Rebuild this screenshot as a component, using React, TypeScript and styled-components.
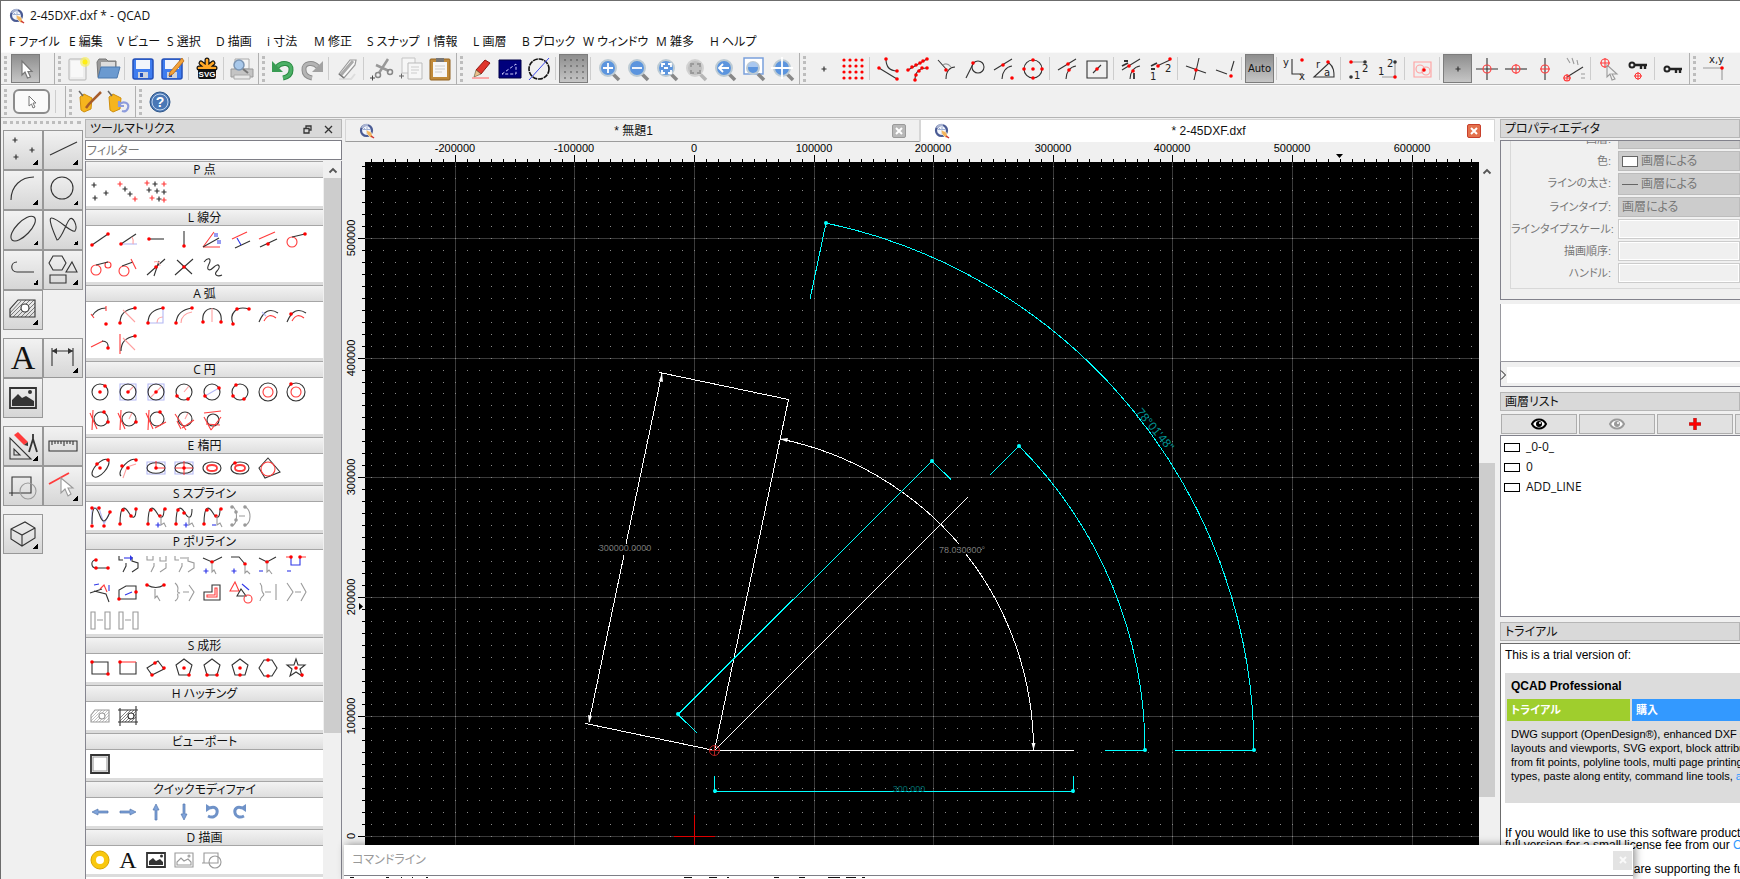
import React from "react";
import styled, { createGlobalStyle, css } from "styled-components";

const ui = `"Open Sans", "Noto Sans CJK JP", sans-serif`;
const plain = `"Liberation Sans", "Noto Sans CJK JP", sans-serif`;

const GlobalStyle = createGlobalStyle`
  * { box-sizing: border-box; font-feature-settings: "palt" !important; }
  body { margin: 0; background: #f0f0f0; font: 12px/16px ${ui}; color: #111; }
  button, input, select { font: inherit; color: inherit; margin: 0; padding: 0; }
`;

/* ---------- glyph drawing ---------- */

const inks: Record<string, string> = {
  k: "#333333", r: "#ff3b3b", l: "#ffa0a0", b: "#3038e8", v: "#b4b8f4", g: "#9a9a9a", w: "#ffffff",
};

/* Each layer is "<kind><ink>:<data>": p path, t thick path, h hairline, f filled path, o circle (x,y,r), + crosses, . dots */
function Layer({ spec }: { spec: string }) {
  const [head, data] = spec.split(":");
  const ink = inks[head[1]];
  const pts = () => data.split(" ").map((p) => p.split(",").map(Number));
  switch (head[0]) {
    case "p": return <path d={data} fill="none" stroke={ink} strokeWidth={1.1} />;
    case "t": return <path d={data} fill="none" stroke={ink} strokeWidth={1.8} />;
    case "h": return <path d={data} fill="none" stroke={ink} strokeWidth={0.6} />;
    case "f": return <path d={data} fill={ink} />;
    case "o": return <>{pts().map(([x, y, r], i) => <circle key={i} cx={x} cy={y} r={r} fill="none" stroke={ink} strokeWidth={1.1} />)}</>;
    case "+": return <path d={pts().map(([x, y]) => `M${x - 2.5} ${y}h5M${x} ${y - 2.5}v5`).join("")} stroke={ink} strokeWidth={1.2} />;
    default: return <>{pts().map(([x, y], i) => <circle key={i} cx={x} cy={y} r={1.8} fill={head[1] === "r" ? "#ff0000" : ink} />)}</>;
  }
}

const Svg = styled.svg<{ $dim?: boolean }>`
  display: block;
  flex: none;
  overflow: visible;
  opacity: ${(p) => (p.$dim ? 0.55 : 1)};
`;

function Glyph({ s, box = 20, size = box }: { s: string; box?: number; size?: number }) {
  return (
    <Svg width={size} height={size} viewBox={`0 0 ${box} ${box}`} aria-hidden="true">
      {s.split(";").map((l, i) => <Layer key={i} spec={l} />)}
    </Svg>
  );
}

function Logo() {
  return (
    <Svg width="16" height="16" viewBox="0 0 16 16" aria-hidden="true">
      <circle cx="7.500" cy="7.500" r="5.500" fill="#f3f6fc" stroke="#4a5b94" strokeWidth="2.200" />
      <path d="M3 5A5.500 5.500 0 0 1 9 2" fill="none" stroke="#a9b4d2" strokeWidth="2.200" />
      <path d="M4 6.500h8M8 3.500v8M5 5l6 6" stroke="#9fb0d4" strokeWidth="1" />
      <path d="M7 7l5 2 2 5-2 1-4-4z" fill="#f2b45c" stroke="#fff" strokeWidth=".5" />
      <path d="M12 13l3 2" stroke="#c33" strokeWidth="1.500" />
    </Svg>
  );
}

/* ---------- toolbar pictures ---------- */

const T = ({ children, dim }: { children: React.ReactNode; dim?: boolean }) => (
  <Svg width="24" height="24" viewBox="0 0 24 24" $dim={dim} aria-hidden="true">{children}</Svg>
);

const Cursor = () => <T><path d="M8 4v14l3-3 2.500 6 3-1-2.500-5.500h4z" fill="#fff" stroke="#777" strokeWidth="1.200" /></T>;
const NewFile = () => (
  <T>
    <rect x="2" y="2" width="17" height="21" rx="1" fill="#eee" stroke="#b5b5b5" />
    <path d="M4 4h12v16H4z" fill="#f8f8f8" />
    <circle cx="18" cy="5" r="5" fill="#f6ee60" opacity=".7" /><circle cx="18" cy="5" r="2.500" fill="#ffee11" />
  </T>
);
const OpenFile = () => (
  <T>
    <path d="M1 5l2-3h7l2 2h8v16H2z" fill="#999" stroke="#777" />
    <path d="M5 5h14v6H5z" fill="#ddd" />
    <path d="M5 10h19l-3 11H2z" fill="#6b9ad0" stroke="#4a78ae" />
  </T>
);
const Disk = ({ pen }: { pen?: boolean }) => (
  <T>
    <rect x="2" y="2" width="20" height="20" rx="2" fill="#3f7df0" stroke="#2450b8" strokeWidth="1.500" />
    <path d="M5 3h14v9H5z" fill="#f2f5fb" />
    <path d="M7 15h10v6H7z" fill="#cdd3de" /><path d="M9 16h3v4H9z" fill="#2450b8" />
    {pen && <path d="M22 1l2 3-11 13-4 2 1-4z" fill="#f2a23a" stroke="#b86a14" strokeWidth=".8" />}
  </T>
);
const SvgMark = () => (
  <T>
    <path d="M12 11V3M12 11L6 6M12 11L18 6M12 11H4M12 11H20" stroke="#111" strokeWidth="5" strokeLinecap="round" />
    <rect x="3" y="10" width="18" height="12" rx="2" fill="#111" />
    <path d="M12 11V3M12 11L6 6M12 11L18 6M12 11H4M12 11H20" stroke="#ffa726" strokeWidth="2.600" strokeLinecap="round" />
    <path d="M3 12H21V20H3Z" fill="#111" />
    <text x="12" y="20" textAnchor="middle" fontFamily="Liberation Sans" fontWeight="bold" fontSize="8" fill="#fff">SVG</text>
  </T>
);
const Printer = () => (
  <T>
    <path d="M5 2h14v10H5z" fill="#f4f4f4" stroke="#aaa" />
    <path d="M1 12h22v8H1z" fill="#c4c4c4" stroke="#999" /><path d="M4 18h16v4H4z" fill="#e8e8e8" stroke="#aaa" />
    <circle cx="9" cy="8" r="5" fill="#a8c8ea" stroke="#7b95b3" strokeWidth="1.500" /><path d="M13 12l5 4" stroke="#777" strokeWidth="2" />
  </T>
);
const Undo = ({ redo }: { redo?: boolean }) => (
  <T>
    <g transform={redo ? "matrix(-1 0 0 1 24 0)" : undefined}>
      <path d="M6 10C11 4 21 6 20 13c0 4-3 7-8 8" fill="none" stroke={redo ? "#8c8c8c" : "#2a8a42"} strokeWidth="5" />
      <path d="M6 10C11 4 21 6 20 13c0 4-3 7-8 8" fill="none" stroke={redo ? "#b4b4b4" : "#4cb066"} strokeWidth="3" />
      <path d="M1 4v11h11z" fill={redo ? "#a2a2a2" : "#3a9c54"} />
    </g>
  </T>
);
const Eraser = () => <T><path d="M4 22h12l4-5" fill="none" stroke="#ddd" strokeWidth="2" /><path d="M4 17L15 3h6l-1 5L9 21z" fill="#fafafa" stroke="#999" strokeWidth="1.200" /><path d="M6 18L18 4" stroke="#aaa" strokeWidth="3" /><path d="M4 17l5 4" stroke="#777" strokeWidth="1.500" /></T>;
const Cut = () => (
  <T><path d="M18 2L9 16M6 8l13 6" stroke="#999" strokeWidth="2.500" /><circle cx="8" cy="18" r="2.500" fill="none" stroke="#888" strokeWidth="1.500" /><circle cx="20" cy="15" r="2.500" fill="none" stroke="#888" strokeWidth="1.500" /><path d="M0 21h5M2.500 18.500v5" stroke="#444" /></T>
);
const Copy = () => (
  <T><path d="M3 1h13v15H3z" fill="#f6f6f6" stroke="#c4c4c4" /><path d="M9 6h14v16H9z" fill="#f6f6f6" stroke="#bbb" /><path d="M12 10h8M12 13h8M12 16h6" stroke="#ccc" /><path d="M0 19h5M2.500 16.500v5" stroke="#666" /></T>
);
const Paste = () => (
  <T><rect x="2" y="2" width="20" height="21" rx="1" fill="#c08a3a" stroke="#916322" /><path d="M5 5h14v15H5z" fill="#f6f6f6" /><path d="M7 9h10M7 12h10M7 15h7" stroke="#ccc" /><path d="M8 1h8v4H8z" fill="#777" /></T>
);
const Pencil = () => (
  <T><path d="M16 3l5 3-9 11-5-4z" fill="#e0352b" stroke="#8f1710" /><path d="M7 13l5 4-7 3z" fill="#ecc08c" stroke="#553" strokeWidth=".6" /><path d="M3 21h17" stroke="#f77" strokeWidth="1.200" /></T>
);
const Draft = () => <T><path d="M1 3h22v18H1z" fill="#00007c" stroke="#000046" /><path d="M4 17L18 7v10z" fill="none" stroke="#d0d0ff" strokeDasharray="3 2" /></T>;
const Hairline = () => <T><circle cx="12" cy="12" r="10" fill="none" stroke="#111" strokeWidth="1.600" strokeDasharray="5 .8" /><path d="M2 23L22 1" stroke="#3c48e8" /></T>;
const DotGrid = ({ ink, step, r }: { ink: string; step: number; r: number }) => (
  <T>{[0, 1, 2, 3].flatMap((y) => [0, 1, 2, 3].map((x) => <circle key={`${x}${y}`} cx={12 + (x - 1.5) * step} cy={12 + (y - 1.5) * step} r={r} fill={ink} />))}</T>
);
const Lens = ({ sign, gray, frame }: { sign: string; gray?: boolean; frame?: boolean }) => (
  <T dim={gray}>
    {frame && <path d="M2 1h19v16H2z" fill="#fff" stroke="#7aa0dc" strokeWidth="1.500" />}
    <path d="M16 17l6 6" stroke="#888" strokeWidth="3.600" />
    <circle cx="11" cy="11" r={frame ? 6 : 8} fill={gray ? "#999" : "#5c95de"} stroke={gray ? "#bbb" : "#bdcbd4"} strokeWidth="2" />
    {frame && <path d="M6 10a5 5 0 0 1 10 0z" fill="#a9c8f0" />}
    <path d={sign} fill="none" stroke={gray ? "#555" : "#fff"} strokeWidth="1.800" />
  </T>
);
const Words = ({ s, words }: { s: string; words: [number, number, string][] }) => (
  <T>
    {s.split(";").map((l, i) => <Layer key={i} spec={l} />)}
    {words.map(([x, y, w]) => <text key={w} x={x} y={y} fontFamily="DejaVu Sans" fontSize="10" fill="#222">{w}</text>)}
  </T>
);
const Key = ({ mark }: { mark?: boolean }) => (
  <T><g transform={mark ? "translate(0 -4)" : undefined}><circle cx="6" cy="12" r="2.500" fill="none" stroke="#222" strokeWidth="2" /><path d="M9 12h12M15 12v4M19 12v4" stroke="#222" strokeWidth="2.400" /></g>
    {mark && <><circle cx="12" cy="19" r="3" fill="none" stroke="#f33" /><path d="M8 19h8M12 15v8" stroke="#f33" /></>}</T>
);
const Tag = ({ undo }: { undo?: boolean }) => (
  <T><path d="M2 7l4-3 8 4-1 11-7 3-3-2z" fill="#f6b51e" stroke="#cf8f0d" /><path d="M1 1l4 5" stroke="#666" strokeWidth="1.500" />
    {undo ? <path d="M12 15c4-5 11-2 9 3-1 3-3 4-6 3M12 11v5h5" fill="none" stroke="#8d9cdc" strokeWidth="2.200" /> : <path d="M23 2L11 14l-3 4" fill="none" stroke="#a75c2b" strokeWidth="2.500" />}</T>
);
const Help = () => (
  <T><circle cx="12" cy="12" r="10" fill="#4a78b6" stroke="#2f5688" /><circle cx="12" cy="12" r="8" fill="none" stroke="#c3d6ee" />
    <text x="12" y="17" textAnchor="middle" fontFamily="Liberation Sans" fontWeight="bold" fontSize="14" fill="#fff">?</text></T>
);
const G = (s: string) => <Glyph s={s} box={24} />;

type Item = "|" | "/" | { name: string; pic: React.ReactNode; on?: boolean };
const t = (name: string, pic: React.ReactNode, on = false): Item => ({ name, pic, on });

const mainTools: Item[] = [
  t("新規", <NewFile />), t("開く", <OpenFile />), "|", t("保存", <Disk />), t("別名で保存", <Disk pen />), "|",
  t("SVG", <SvgMark />), "|", t("印刷プレビュー", <Printer />), "/",
  t("元に戻す", <Undo />), t("やり直し", <Undo redo />), "|", t("削除", <Eraser />), "|",
  t("切り取り", <Cut />), t("コピー", <Copy />), t("貼り付け", <Paste />), "/",
  t("線", <Pencil />), t("ドラフト", <Draft />), t("細線", <Hairline />), "|",
  t("グリッド", <DotGrid ink="#444" step={6} r={0.8} />, true), "|",
  t("拡大", <Lens sign="M6 11h10M11 6v10" />), t("縮小", <Lens sign="M6 11h10" />),
  t("自動ズーム", <Lens sign="M7 10V7h3M13 7h3v3M16 13v3h-3M10 16H7v-3M9 11h4" />),
  t("選択ズーム", <Lens gray sign="M7 10V7h3M13 7h3v3M16 13v3h-3M10 16H7v-3" />),
  t("前のビュー", <Lens sign="M16 11H7M10 7l-4 4 4 4" />), t("窓ズーム", <Lens frame sign="" />),
  t("パン", <Lens sign="M0 11h22M11 0v22" />), "/",
  t("フリースナップ", G("+k:12,12")), t("グリッドスナップ", <DotGrid ink="#ff0000" step={6} r={1.6} />), "|",
  t("端点", G("pk:M3 11L21 22M10 2C10 10 14 14 21 14;.r:3,11 21,22 10,2 21,14")),
  t("線上", G("pk:M3 13L22 2M10 23C10 15 14 11 22 11;.r:3,13 7,10 11,8 15,6 18,4 22,2 10,23 11,18 14,14 17,11 22,11")),
  t("垂線", G("pk:M4 3L13 13M12 22C12 14 16 10 21 10;pg:M9 8Q13 5 17 10;.r:12,13")),
  t("接線", G("pk:M3 21L10 7;ok:15,10,6;.r:10,6")),
  t("中点", G("pk:M2 13L20 2M10 22C10 15 14 10 20 9;.r:11,8 20,21")),
  t("中心", G("ok:12,12,9;.r:12,12 3,12 21,12 12,3 12,21")), "|",
  t("交点", G("pk:M2 13L20 2M10 22C10 15 14 10 20 9;.r:12,7 13,13")),
  t("参照", G("pk:M2 4H22V21H2ZM8 16L16 8;.r:12,12")), "|",
  t("距離", G("tk:M2 9L8 6M14 16V22M4 4h4;pk:M2 13L20 2M10 22C10 15 14 10 20 9;.r:9,9 13,14")),
  t("距離2", <Words s="tk:M2 9L8 6M2 12h4;pk:M8 9L21 3;.r:9,9 21,2" words={[[1, 23, "1"], [16, 15, "2"]]} />), "|",
  t("交差", G("pk:M2 9L22 16M15 1L10 23;.r:12,13")), t("延長", G("pk:M3 13L14 17M21 4L18 14;.r:18,19")), "|",
  t("Auto", "Auto", true), "|",
  t("直交座標", <Words s="pk:M9 2V17H20;.r:19,3" words={[[0, 9, "y"], [16, 23, "x"]]} />),
  t("極座標", <Words s="pk:M2 20L17 6C22 10 22 15 22 20Z;.r:16,5" words={[[4, 11, "r"], [12, 19, "a"]]} />), "|",
  t("制限1", <Words s="pg:M4 5H18;.r:4,5;.k:18,5 4,20" words={[[7, 22, "1"], [15, 15, "2"]]} />),
  t("制限2", <Words s="pg:M19 5V20H6;.r:19,20;.k:19,5" words={[[2, 18, "1"], [11, 10, "2"]]} />), "|",
  t("補助", G("pl:M3 5H20V20H3Z;ol:9,12,4 15,14,4;.r:13,13")), "|",
  t("制限なし", G("+k:12,12"), true),
  t("直交", G("pk:M1 12H23M12 1V23;or:12,12,4")), t("水平", G("pk:M1 12H23;or:12,12,4;pr:M12 7V17")),
  t("垂直", G("pk:M12 1V23;or:12,12,4;pr:M7 12H17")),
  t("角度", G("pk:M5 20L21 10;or:5,21,3;pr:M1 21H9M5 17V24;pg:M5 1L8 6M10 1L12 7M15 3L16 8M19 17h4M19 21h4")), "|",
  t("相対零点", G("or:8,6,4;pr:M3 6H13M8 1V11;pg:M10 8V20L13 17L15 23L18 22L15 17H20Z")),
  t("零点ロック", <Key mark />), "|", t("ロック", <Key />), "/",
  t("座標", <Words s="pg:M1 11H20M20 11V23;.r:20,11" words={[[7, 6, "x,y"]]} />),
];

/* ---------- chrome ---------- */

const Window = styled.div`
  display: flex;
  flex-direction: column;
  height: 100vh;
  border: solid #6c6c6c;
  border-width: 1px 0 0 1px;
  overflow: hidden;
  position: relative;
`;
const TitleBar = styled.header`
  display: flex;
  align-items: center;
  gap: 5px;
  height: 30px;
  padding: 0 8px;
  background: #fff;
  flex: none;
`;
const Menu = styled.nav`
  display: flex;
  height: 21px;
  align-items: center;
  background: #fff;
  flex: none;
`;
const MenuItem = styled.button<{ $w: number }>`
  width: ${(p) => p.$w}px;
  padding-left: 8px;
  border: 0;
  background: none;
  text-align: left;
  white-space: nowrap;
`;
const ToolBar = styled.div`
  display: flex;
  align-items: center;
  height: 33px;
  flex: none;
  border-bottom: 1px solid #b4b4b4;
  border-top: 1px solid #fafafa;
`;
const Handle = styled.i<{ $flat?: boolean }>`
  flex: none;
  ${(p) => p.$flat
    ? css`height: 3px; width: 78px; border-top: 3px dotted #bdbdbd;`
    : css`width: 3px; height: 26px; border-left: 3px dotted #bdbdbd;`}
`;
const Break = styled.span`
  flex: none;
  display: flex;
  align-items: center;
  gap: 3px;
  width: 12px;
  height: 32px;
  &::before { content: ""; width: 1px; height: 32px; margin-left: 2px; background: #b0b0b0; }
`;
const Rule = styled.i`
  flex: none;
  width: 1px;
  height: 23px;
  margin: 0 3px 0 2px;
  background: #cdcdcd;
`;
const Space = styled.i<{ $w: number }>`
  flex: none;
  width: ${(p) => p.$w}px;
`;
const ToolButton = styled.button<{ $on?: boolean }>`
  flex: none;
  display: grid;
  place-items: center;
  width: 29px;
  height: 29px;
  border: 1px solid ${(p) => (p.$on ? "#7d7d7d" : "transparent")};
  background: ${(p) => (p.$on ? "linear-gradient(#8e8e8e, #c6c6c6)" : "none")};
  font: 10px/12px "DejaVu Sans", sans-serif;
`;
const Lead = styled.span`
  display: flex;
  align-items: center;
  flex: none;
  width: 10px;
  padding-left: 3px;
`;
const PillButton = styled.button`
  display: grid;
  place-items: center;
  width: 37px;
  height: 25px;
  margin: 0 3px 0 2px;
  border: 2px solid #8c8c8c;
  border-radius: 6px;
  background: #fafafa;
`;

function Items({ items }: { items: Item[] }) {
  return (
    <>
      {items.map((it, i) => it === "|" ? <Rule key={i} /> : it === "/" ? <Break key={i}><Handle /></Break>
        : <ToolButton key={i} $on={it.on} aria-label={it.name}>{it.pic}</ToolButton>)}
    </>
  );
}

const menus: [string, number][] = [
  ["F ファイル", 60], ["E 編集", 48], ["V ビュー", 50], ["S 選択", 49], ["D 描画", 51], ["i 寸法", 47], ["M 修正", 53],
  ["S スナップ", 60], ["I 情報", 46], ["L 画層", 49], ["B ブロック", 61], ["W ウィンドウ", 73], ["M 雑多", 54], ["H ヘルプ", 60],
];

const Body = styled.div`
  flex: 1;
  min-height: 0;
  display: grid;
  grid-template-columns: 84px 257px minmax(0, 1fr) 240px;
`;

/* ---------- left palette ---------- */

const Palette = styled.div`
  padding: 3px 0 0 2px;
`;
const PaletteGroups = styled.div`
  display: flex;
  flex-direction: column;
  gap: 8px;
  padding-top: 6px;
`;
const PaletteGroup = styled.div`
  display: grid;
  grid-template-columns: 40px 40px;
  grid-auto-rows: 40px;
`;
const PaletteButton = styled.button<{ $menu: boolean }>`
  display: grid;
  place-items: center;
  border: 1px solid #989898;
  background: linear-gradient(#f2f2f2, #d6d6d6);
  font: 34px/34px "Liberation Serif", serif;
  ${(p) => p.$menu && css`
    background: linear-gradient(135deg, transparent 50%, #000 50%) right 4px bottom 4px / 5px 5px no-repeat, linear-gradient(#f2f2f2, #d6d6d6);
  `}
`;

const hatch = "M2 14V22H27V5H10Z";
const palette: [string, React.ReactNode, boolean][][] = [
  [
    ["点", <Glyph s="+k:7,5 24,15 8,22" box={30} />, true],
    ["線", <Glyph s="pk:M2 20L29 7" box={30} />, true],
    ["弧", <Glyph s="pk:M3 25C3 11 13 2 26 2" box={30} />, true],
    ["円", <Glyph s="ok:14,13,11" box={30} />, true],
    ["楕円", <Glyph s="pk:M4 25C-2 18 19-3 26 2C33 8 11 31 4 25Z" box={30} />, true],
    ["スプライン", <Glyph s="pk:M9 25C6 18-1 2 4 3C11 4 24 19 27 16C30 12 25-1 21 5C18 9 13 25 9 25Z" box={30} />, true],
    ["ポリライン", <Glyph s="pk:M9 7C2 7 2 17 9 17H26" box={30} />, true],
    ["形", <Glyph s="pk:M5 1H14L18 8L14 15H5L1 8ZM24 7L29 17H18ZM2 20H18V28H2Z" box={30} />, true],
    ["ハッチ", <Glyph s={`pk:${hatch};hk:M2 18L13 6M2 21L18 5M5 22L22 5M9 22L26 5M13 22L27 8M17 22L27 12M21 22L27 16;fw:M13 13a4 4 0 1 0 8 0a4 4 0 1 0-8 0Z;ok:17,13,4`} box={30} />, true],
  ],
  [
    ["文字", "A", false],
    ["寸法", <Glyph s="pk:M4 23V5M25 23V5M4 8H25;fk:M4 8L9 5V11ZM25 8L20 5V11Z" box={30} />, true],
    ["画像", <Glyph s="tk:M2 5H28V25H2Z;fk:M4 23V17L10 11L14 15L18 13L26 18V23ZM20 9a2 2 0 1 0 4 0a2 2 0 1 0-4 0Z" box={30} />, false],
  ],
  [
    ["修正", <Glyph s="pk:M2 7V28H23ZM6 18V24H12Z;tk:M25 3V8L21 21M25 8L29 21;fr:M6 4L10 1L20 11L16 14Z;fk:M16 14L20 11L20 15Z" box={30} />, true],
    ["計測", <Glyph s="pk:M1 10H29V20H1ZM4 10v4M7 10v3M10 10v3M13 10v3M16 10v5M19 10v3M22 10v3M25 10v4" box={30} />, false],
    ["ブロック", <Glyph s="pk:M4 6H23V22H4ZM1 22H7M4 19V25;og:20,20,8" box={30} />, false],
    ["選択", <Glyph s="tr:M1 13L21 2;fw:M13 7V22L17 18L20 25L23 23L20 17H25Z;pg:M13 7V22L17 18L20 25L23 23L20 17H25Z" box={30} />, true],
  ],
  [["投影", <Glyph s="pk:M3 10L17 3L27 9V19L14 27L3 20ZM3 10L14 16L27 9M14 16V27" box={30} />, true]],
];

/* ---------- tool matrix ---------- */

const Dock = styled.section`
  display: flex;
  flex-direction: column;
  min-width: 0;
  padding-top: 1px;
`;
const DockTitle = styled.h2`
  display: flex;
  align-items: center;
  gap: 4px;
  flex: none;
  height: 19px;
  margin: 0 0 2px;
  padding: 1px 4px 0;
  border: 1px solid #b6b6b6;
  background: #d9d9d9;
  font: 12px/16px ${ui};
  white-space: nowrap;
  span { flex: 1; }
`;
const PlainButton = styled.button`
  display: grid;
  place-items: center;
  width: 17px;
  height: 16px;
  border: 0;
  background: none;
`;
const Filter = styled.input`
  flex: none;
  height: 20px;
  padding: 0 1px;
  border: 1px solid #7e7e86;
  background: #fff;
  &::placeholder { color: #777; opacity: 1; }
`;
const MatrixFrame = styled.div`
  flex: 1;
  min-height: 0;
  margin-top: 1px;
  display: grid;
  grid-template-columns: 1fr 17px;
  border: solid #85858f;
  border-width: 0 1px;
  overflow: hidden;
`;
const MatrixList = styled.div`
  min-height: 0;
  overflow: hidden;
  background: #fff;
  margin-right: 1px;
`;
const SectionHead = styled.h3`
  height: 17px;
  margin: 0;
  border: solid #a6a6a6;
  border-width: 1px 0;
  background: linear-gradient(#f3f3f3, #dedede);
  font: 12px/15px ${ui};
  text-align: center;
`;
const SectionBody = styled.div`
  display: grid;
  grid-template-columns: repeat(8, 28px);
  grid-auto-rows: 28px;
  border-bottom: 3px solid #dcdcdc;
`;
const CellButton = styled.button`
  display: grid;
  place-items: center;
  border: 0;
  background: none;
  font: 24px/24px "Liberation Serif", serif;
`;
const ScrollTrack = styled.div<{ $before: number; $thumb: number }>`
  background: #f0f0f0;
  display: flex;
  flex-direction: column;
  align-items: center;
  svg { margin: 6px 0 4px; }
  &::after {
    content: "";
    width: 100%;
    height: ${(p) => p.$thumb}px;
    margin-top: ${(p) => p.$before}px;
    background: #cdcdcd;
  }
`;
const UpArrow = () => <Svg width="8" height="6" viewBox="0 0 8 6" aria-hidden="true"><path d="M.5 5.500L4 2l3.500 3.500" fill="none" stroke="#555" strokeWidth="1.800" /></Svg>;

const pg5 = "M10 1L18 7L15 17H5L2 7Z";
const spline = "pk:M2 18C2-2 7 0 11 7S18 12 18 3";
const sections: [string, (string | React.ReactNode)[]][] = [
  ["P 点", [
    "+k:4,3 16,11 5,16", "+r:2,2 17,17;+k:7,7 12,12",
    "+r:1,1 18,2 6,16 18,18;+k:9,2 3,8 11,9 18,10 13,17",
  ]],
  ["L 線分", [
    "pk:M2 15L18 4;.r:2,15 18,4", "pv:M3 14H19;pk:M3 14L18 4;pl:M14 7Q16 10 15 14;.r:3,14", "pk:M3 9H18;.r:3,9", "pk:M10 1V17;.r:10,16",
    "pr:M1 17H18M1 17L12 2;pk:M1 17L17 8;pb:M12 4h4M12 6h4M15 11h4M15 13h4", "pr:M2 9L17 2;pk:M5 18L20 11;pb:M7 8L11 15", "pr:M1 9L17 2;pk:M2 17L19 9;.r:10,14", "or:6,12,5;pk:M6 7L19 4;.r:19,4",
    "or:6,12,5 18,7,3;pk:M6 7L18 4", "or:6,13,5;pk:M4 8L15 4;pr:M13 1L18 11", "pk:M1 17L19 1M8 18L13 3;pl:M8 4Q13 2 14 8;.r:10,9", "pk:M1 17L19 1M3 2L18 16;.r:10,9",
    "pk:M2 4C6-1 10 0 7 6S7 14 12 9S19 9 15 13S16 19 20 17",
  ]],
  ["A 弧", [
    "pk:M2 10Q7 2 16 2;pr:M1 8L4 12M16 0V5;.r:16,18", "pk:M2 17Q2 4 17 2;pl:M5 4L17 16;.r:2,17 17,2", "pk:M2 17Q2 4 17 2;pl:M11 17Q11 11 17 11;pv:M2 17H17V2;.r:2,17 17,2", "pk:M2 17Q3 4 18 2;pl:M7 17Q7 8 18 6;.r:2,17 18,2",
    "pk:M1 16C-2-2 22-2 19 16;pl:M10 2V16;.r:1,16 19,16", "pk:M3 18C-1 8 6-1 19 3;.r:3,18 7,3 19,3", "pk:M1 16Q8-1 20 7;pr:M6 15Q11 6 18 12;pv:M4 6L8 10", "pk:M1 16Q8-1 20 7;pr:M6 15Q11 6 18 12;.r:5,8",
    "pr:M1 13L13 7;pk:M12 7Q19 7 18 14;.r:18,14", "pr:M2 0V20;pk:M3 17Q3 4 17 2;pl:M5 4L17 16;.r:17,2",
  ]],
  ["C 円", [
    "ok:10,10,8;.r:10,10 15,4", "pv:M2 2H18V18H2Z;ok:10,10,8;pl:M10 10L15 5;.r:10,10", "pv:M2 2H18V18H2Z;ok:10,10,8;pl:M5 15L15 5;.r:10,10", "ok:10,10,8;pl:M10 10L15 4;.r:3,14 14,17",
    "ok:10,10,8;pv:M3 14L17 6;.r:3,14 17,6", "ok:10,10,8;.r:6,3 3,14 14,17", "ok:10,10,9;or:10,10,5", "ok:10,10,9;or:10,10,5;.r:5,2",
    "ok:11,9,7;pr:M0 3L7 19M3 0L2 20;.r:14,2 18,12", "ok:11,9,7;pr:M0 3L7 19M3 0L2 20;pl:M11 9L14 3;.r:18,12", "ok:11,9,7;pr:M0 3L7 19M3 0L2 20M9 18L20 12;.r:14,2", "ok:11,9,7;pr:M1 4L12 20M8 18L20 10M3 11L7 19;pl:M11 9L14 3",
    "ok:11,10,6;pr:M2 3L19 1M2 7L9 20M19 7L9 20M4 14L18 15",
  ]],
  ["E 楕円", [
    "pk:M3 18C-2 13 13-2 18 2S8 24 3 18Z;.r:7,6 10,10 18,2", "pk:M3 18C-2 13 13-2 18 2;pl:M18 6L9 9L5 20;.r:4,8 10,10 18,2", "pv:M1 4H19V16H1Z;pk:M1 10C1 3 19 3 19 10S1 17 1 10Z;pr:M10 3V10H19;.r:10,10", "pv:M1 4H19V16H1Z;pk:M1 10C1 3 19 3 19 10S1 17 1 10Z;pr:M10 3V17M1 10H19;.r:10,10",
    "pk:M1 10C1 2 19 2 19 10S1 18 1 10Z;tr:M5 10C5 6 15 6 15 10S5 14 5 10Z", "pk:M1 10C1 2 19 2 19 10S1 18 1 10Z;tr:M5 10C5 6 15 6 15 10S5 14 5 10Z;.r:5,5", "pk:M10 0L22 14L7 20L1 10Z;or:10,11,7",
  ]],
  ["S スプライン", [
    "pv:M2 18L2 2H9L14 18L20 6;pk:M2 18C2-6 7 2 10 10S16 16 20 6;.r:2,2 9,2 2,20 14,20 20,6", spline + ";.r:2,18 5,4 13,10 18,3", spline + ";.r:2,18 5,4 14,10 19,3;+b:12,19;pg:M15 10V19L18 17L20 21", spline + ";.r:2,18 4,4 10,7;+b:12,19;pg:M15 10V19L18 17L20 21",
    spline + ";.r:2,18 5,4 14,10 19,3;pb:M10 19H14;pg:M15 10V19L18 17L20 21", "pg:M2 0C8 4 8 17 2 20M14 0C22 4 22 17 14 20M9 10H15;.g:2,1 6,6 6,14 2,19 15,1 15,19",
  ]],
  ["P ポリライン", [
    "pk:M6 6C0 6 1 14 6 14H18;.r:6,6 6,14 18,14", "pk:M1 2V6H5M5 18L8 12V9M14 3V7L20 9V14L14 18;pb:M6 4H12;fb:M12 1V7L15 4Z", "pg:M1 2V6H7V2M5 18L8 12V9M14 3V7H20V2M14 18L20 14V9", "pg:M1 2V6H5M5 18L8 12V9M14 3V7L20 9V14L14 18M6 4H13",
    "pk:M1 4L10 8L20 3;.r:10,8;+b:4,17;pg:M10 9V18L12 16L14 20", "pk:M1 3H9L15 10;.r:15,10;+b:4,17;pg:M15 11V19L17 17L20 20", "pk:M1 4L9 8L18 3;.r:9,8;pb:M1 17H5;pg:M9 9V18L11 16L14 20", "pr:M0 3H5M15 3H20;pb:M5 3V11H14V3;.r:5,3 14,3;pb:M1 17H5",
    "pk:M0 11L12 7M4 9L16 12L19 20;pr:M10 7L14 3L17 10;pb:M4 3L9 2M19 3V9", "pk:M1 17V8L8 4H18V17Z;pb:M7 13L14 10;.r:1,17 18,10", "pk:M1 3Q10 8 18 3;.r:1,3 18,3;pg:M9 7V16L11 14L14 19", "pg:M1 1C8 7 0 10 6 11C0 12 8 14 1 19M9 10H15M15 3L20 10L15 19",
    "pk:M10 3H18V18H2V10H10Z;pr:M13 6H15V15H5V13H13Z", "pr:M0 9L5 0L9 9Z;pk:M7 14L11 7L16 14Z;pb:M12 2L19 8;or:18,17,4", "pg:M2 1C6 6 2 8 5 11S2 14 2 19M7 10H13M18 2V18", "pg:M1 1L7 10L1 19M9 10H15M15 1L20 10L15 19",
    "pg:M1 2H5V19H1ZM7 10H13M15 2H20V19H15Z", "pg:M1 2H5V19H1ZM7 10H13M15 2H20V19H15Z",
  ]],
  ["S 成形", [
    "pk:M2 4H18V16H2Z;.r:2,4 18,16", "pk:M2 4V16H18V4;pr:M2 4H18;.r:2,4", "pk:M1 10L12 3L18 11L6 17Z;.r:9,5 18,10 6,17", `pk:${pg5};.r:10,10 15,17`,
    `pk:${pg5};.r:5,17 15,17`, `pk:${pg5};.r:10,10 10,17`, "pk:M6 2H14L19 10L14 18H6L1 10Z;.r:10,2 10,18", "pk:M10 1L12 7H19L14 11L16 18L10 14L4 18L6 11L1 7H8Z;.r:10,10 16,17",
  ]],
  ["H ハッチング", [
    "pg:M1 9L5 4H19V16H1Z;hg:M1 12L9 4M1 15L12 4M3 16L15 4M6 16L18 4M9 16L19 6M12 16L19 9M15 16L19 12;fw:M9 10a3 3 0 1 0 6 0a3 3 0 1 0-6 0Z;og:12,10,3", "pk:M0 4H20M0 16H20M2 2V20M18 0V19;hk:M2 12L10 4M2 15L13 4M4 16L16 4M7 16L18 5M10 16L18 8M13 16L18 11;fw:M10 10a3 3 0 1 0 6 0a3 3 0 1 0-6 0Z;ok:13,10,3",
  ]],
  ["ビューポート", ["tk:M1 1H19V19H1Z;pg:M3 3H17V17H3Z"]],
  ["クイックモディファイ", [
    ...[0, 180, 90, 270].map((a) => (
      <Svg key={a} width="18" height="18" viewBox="0 0 18 18"><path transform={`rotate(${a} 9 9)`} d="M1 9l6-3v2h10v2H7v2z" fill="#7fa3da" stroke="#5577ac" strokeWidth=".7" /></Svg>
    )),
    ...[false, true].map((f) => (
      <Svg key={String(f)} width="18" height="18" viewBox="0 0 18 18"><g transform={f ? "matrix(-1 0 0 1 18 0)" : undefined} ><path d="M7 5c5-2 8 1 7 5s-5 5-9 3" fill="none" stroke="#6f92c8" strokeWidth="3" /><path d="M3 1v8l6-4z" fill="#6f92c8" /></g></Svg>
    )),
  ]],
  ["D 描画", [
    <Svg key="ring" width="20" height="20" viewBox="0 0 20 20"><circle cx="10" cy="10" r="6.500" fill="none" stroke="#f9c80e" strokeWidth="5" /><circle cx="10" cy="10" r="9" fill="none" stroke="#d9a400" /></Svg>,
    <React.Fragment key="a">A</React.Fragment>,
    "tk:M1 3H19V17H1Z;fk:M3 15V11L7 8L10 11L14 9L17 12V15ZM14 6a1 1 0 1 0 3 0a1 1 0 1 0-3 0Z", "pg:M1 3H19V17H1ZM3 15V12L7 8L10 11L14 9L17 12V15Z;og:15,6,1", "pg:M2 3H16V13H2ZM0 13H5;og:13,12,6",
  ]],
];

/* ---------- drawing area ---------- */

const U = 119.6; // pixels per 100000 drawing units
const X0 = 329.5;
const Y0 = 674.5;
const range = (a: number, b: number) => Array.from({ length: b - a + 1 }, (_, i) => a + i);
const px = (n: number) => Math.floor(X0 + (n * U) / 10);
const py = (n: number) => Math.floor(Y0 - (n * U) / 10);
const cols = range(-27, 120);
const rows = range(-10, 56);

const Mdi = styled.main`
  display: flex;
  flex-direction: column;
  min-width: 0;
  margin: 0 5px 0 3px;
  padding-top: 1px;
`;
const Tabs = styled.div`
  display: flex;
  flex: none;
  height: 23px;
`;
const Tab = styled.div<{ $active?: boolean }>`
  flex: 1;
  display: grid;
  grid-template-columns: 16px 1fr 14px;
  align-items: center;
  padding: 0 13px;
  border: 1px solid #d6d6d6;
  border-bottom-color: ${(p) => (p.$active ? "#fff" : "#9c9c9c")};
  background: ${(p) => (p.$active ? "#fff" : "#f0f0f0")};
  text-align: center;
  font-family: ${plain};
`;
const CloseButton = styled.button<{ $hot?: boolean }>`
  display: grid;
  place-items: center;
  width: 14px;
  height: 14px;
  border: 1px solid ${(p) => (p.$hot ? "#c8402c" : "#9a9a9a")};
  border-radius: 2px;
  background: ${(p) => (p.$hot ? "#e4714c" : "#b8b8b8")};
`;
const Cross = ({ ink }: { ink: string }) => <Svg width="8" height="8" viewBox="0 0 8 8" aria-hidden="true"><path d="M1 1l6 6M7 1L1 7" stroke={ink} strokeWidth="2" /></Svg>;
const View = styled.div`
  flex: 1;
  min-height: 0;
  display: grid;
  grid-template: 20px minmax(0, 1fr) / 20px minmax(0, 1fr) 16px;
`;
const RulerSvg = styled.svg`
  width: 100%;
  height: 100%;
  display: block;
  font: 11px "Liberation Sans", sans-serif;
  text-anchor: middle;
`;
const Canvas = styled(RulerSvg)`
  background: #000;
  font: 9px "Liberation Sans", sans-serif;
`;

function HRuler() {
  return (
    <RulerSvg>
      <path d={cols.map((n) => `M${px(n)}.5 ${n % 10 ? 17 : 13}V20`).join("")} stroke="#000" shapeRendering="crispEdges" />
      {range(-2, 9).map((n) => <text key={n} x={px(n * 10)} y="10">{n * 100000}</text>)}
      <path d="M971 12h7l-3.500 4z" />
    </RulerSvg>
  );
}
function VRuler() {
  return (
    <RulerSvg>
      <path d={rows.map((n) => `M${n % 10 ? 17 : 13} ${py(n)}.5H20`).join("")} stroke="#000" shapeRendering="crispEdges" />
      {range(0, 5).map((n) => <text key={n} transform={`translate(10 ${py(n * 10)}) rotate(-90)`}>{n * 100000}</text>)}
      <path d="M14 441v7l4-3.500z" />
    </RulerSvg>
  );
}
function Drawing() {
  return (
    <Canvas role="img" aria-label="2-45DXF.dxf">
      <g shapeRendering="crispEdges" fill="none">
        <path d={range(-2, 11).map((n) => `M${px(n * 10)}.5 0V2000`).join("") + range(-1, 5).map((n) => `M0 ${py(n * 10)}.5H4000`).join("")} stroke="#3a3a3a" />
        <path d={rows.map((r) => cols.map((c) => `M${px(c)} ${py(r)}.5h1`).join("")).join("")} stroke="#8a8a8a" />
        <path d="M309 674.500H350M329.500 653V695" stroke="#e00000" />
        <g stroke="#fff">
          <path d="M349.500 588.500H708.500M349.500 588.500L603 335M349.500 588.500L423.500 237.500M349.500 588.500L220.500 561.500M423.500 237.500L294.500 210.500" />
          <path d="M297 211L261 382M259 393L224 560M415.500 277A319 319 0 0 1 594 382M601 392A319 319 0 0 1 668.500 588.500" />
        </g>
        <g stroke="#00ffff">
          <path d="M586 317.500L567 299L313 552.500L332 571M625 313L654 284A430.500 430.500 0 0 1 780 588.500M740 588.500H780M445 137L461 61A539.500 539.500 0 0 1 889 588.500H810" />
          <path d="M349.500 614V631M708.500 614V631M349 629.500H708" />
        </g>
      </g>
      <path d="M297 211l-3 8 4 1zM224 561l-1-8 4 1zM415 277l8-1-1 4zM668.500 588l-2-7h4z" fill="#fff" />
      {[[567, 299], [313, 552], [654, 284], [780, 588], [461, 61], [889, 588], [350, 629], [708, 629]].map(([x, y]) => <circle key={`${x}-${y}`} cx={x} cy={y} r="2" fill="#00ffff" />)}
      <circle cx="349.500" cy="588.500" r="5" fill="none" stroke="#b02020" />
      <path d="M344 588.500H355M349.500 583V594" stroke="#b02020" />
      <text x="260" y="389" fill="#777">300000.0000</text>
      <text x="597" y="391" fill="#777">78.030000°</text>
      <text x="544" y="630" fill="#006868">300,000</text>
      <text transform="translate(787 270) rotate(50)" fontSize="12" fill="#009494">78°01'48"</text>
    </Canvas>
  );
}

/* ---------- right side ---------- */

const Side = styled.aside`
  display: flex;
  flex-direction: column;
  min-width: 0;
  overflow: hidden;
  padding-top: 1px;
`;
const PropFrame = styled.div`
  flex: none;
  height: 160px;
  padding: 0 0 10px 9px;
  margin-bottom: 4px;
  border: solid #82828c;
  border-width: 1px 0 1px 1px;
  overflow: hidden;
  display: flex;
  flex-direction: column;
  justify-content: flex-end;
`;
const PropGroup = styled.div`
  flex: none;
  display: grid;
  grid-template-columns: 100px 1fr;
  grid-template-rows: 20px 20px 22px 20px 20px 20px 20px;
  gap: 2px 7px;
  padding-bottom: 5px;
  border: solid #d8d8d8;
  border-width: 0 0 1px 1px;
  color: #777;
  font-family: ${plain};
  label { text-align: right; font-size: 11px; line-height: 20px; white-space: nowrap; }
`;
const Combo = styled.div`
  display: flex;
  align-items: center;
  gap: 3px;
  padding-left: 3px;
  border: 1px solid #bcbcbc;
  background: #cccccc;
  select { flex: 1; appearance: none; border: 0; background: none; opacity: 1; }
`;
const Swatch = styled.i<{ $line?: boolean }>`
  width: 16px;
  height: ${(p) => (p.$line ? 1 : 11)}px;
  border: 1px solid #666;
  border-width: ${(p) => (p.$line ? "1px 0 0" : "1px")};
  background: #fff;
`;
const Field = styled.input`
  min-width: 0;
  border: 1px solid #ccc;
  background: #f0f0f0;
  box-shadow: inset 0 0 0 1px #fff;
`;
const History = styled.div`
  flex: none;
  height: 58px;
  background: #fff;
  border: solid #9a9aa0;
  border-width: 0 0 1px 1px;
`;
const Prompt = styled.label`
  flex: none;
  display: flex;
  height: 25px;
  margin-bottom: 5px;
  padding: 5px 0 3px;
  border: solid #82828c;
  border-width: 0 0 1px 1px;
  line-height: 16px;
  input { flex: 1; min-width: 0; border: 0; background: #fff; }
`;
const LayerButtons = styled.div`
  flex: none;
  display: grid;
  grid-template-columns: repeat(4, 76px);
  gap: 2px;
  height: 22px;
  padding: 1px 0 1px 1px;
  button { display: grid; place-items: center; border: 1px solid #adadad; background: #e1e1e1; }
`;
const LayerList = styled.ul`
  flex: none;
  height: 182px;
  margin: 0 0 5px;
  padding: 1px 0 0 3px;
  list-style: none;
  background: #fff;
  border: 1px solid #82828c;
  border-right: 0;
  li { display: flex; align-items: center; gap: 6px; height: 20px; }
  i { width: 16px; height: 9px; border: 1px solid #000; }
`;
const Trial = styled.div`
  flex: 1;
  min-height: 0;
  padding: 5px 0 0 4px;
  overflow: hidden;
  background: #fff;
  border: solid #6c6c6c;
  border-width: 1px 0 0 1px;
  font: 12px/12px ${plain};
  white-space: nowrap;
  color: #000;
  p { margin: 0 0 12px; }
  a { color: #2e97ff; text-decoration: none; }
`;
const Offer = styled.div`
  height: 130px;
  margin: 11px 0 24px;
  padding: 6px 0 0 2px;
  background: #dcdcdc;
  font: 11px/14px ${plain};
  h4 { margin: 0 0 5px 4px; font: bold 12px/15px ${plain}; }
  p { margin: 6px 0 0 4px; white-space: pre; }
`;
const OfferLinks = styled.div`
  display: grid;
  grid-template-columns: 123px 123px;
  gap: 2px;
  a { height: 22px; padding-left: 4px; color: #fff; font: bold 11px/22px ${plain}; background: #9fce2d; }
  a + a { background: #3399ff; }
`;
const Eye = ({ ink }: { ink: string }) => (
  <Svg width="16" height="12" viewBox="0 0 16 12" aria-hidden="true"><path d="M1 6C4 0 12 0 15 6C12 12 4 12 1 6Z" fill="#fff" stroke={ink} strokeWidth="2" /><circle cx="8" cy="6" r="3" fill={ink} /><circle cx="9" cy="5" r="1" fill="#fff" /></Svg>
);

/* ---------- floating command line ---------- */

const Command = styled.section`
  position: absolute;
  left: 343px;
  right: 107px;
  bottom: 0;
  height: 34px;
  background: #fff;
  box-shadow: 2px 0 8px rgba(0, 0, 0, 0.45);
`;
const CommandTitle = styled.h2`
  display: flex;
  align-items: center;
  justify-content: space-between;
  height: 31px;
  margin: 0;
  padding: 0 1px 0 8px;
  border-bottom: 1px solid #7e7e86;
  color: #999;
  font: 12px/16px ${ui};
`;
const FaintClose = styled(PlainButton)`
  width: 19px;
  height: 19px;
  background: #e3e3e3;
`;

const DockIcon = ({ d }: { d: string }) => <Svg width="9" height="9" viewBox="0 0 9 9" aria-hidden="true"><path d={d} fill="none" stroke="#333" strokeWidth="1.300" /></Svg>;

export default function App() {
  return (
    <Window>
      <GlobalStyle />
      <TitleBar><Logo /><span>2-45DXF.dxf * - QCAD</span></TitleBar>
      <Menu>{menus.map(([m, w]) => <MenuItem key={m} $w={w}>{m}</MenuItem>)}</Menu>
      <ToolBar>
        <Lead><Handle /></Lead>
        <ToolButton $on aria-label="選択"><Cursor /></ToolButton>
        <Space $w={12} />
        <Items items={["/", ...mainTools]} />
      </ToolBar>
      <ToolBar>
        <Lead><Handle /></Lead>
        <PillButton aria-label="選択"><Svg width="14" height="14" viewBox="0 0 14 14"><path d="M4 1v10l2.500-2 1.500 4 2-1-2-4h3z" fill="#fff" stroke="#777" /></Svg></PillButton>
        <Rule />
        <Space $w={4} />
        <Items items={["/", t("属性", <Tag />), t("属性を戻す", <Tag undo />), "/", t("ヘルプ", <Help />)]} />
      </ToolBar>
      <Body>
        <Palette>
          <Handle $flat as="div" />
          <PaletteGroups>
            {palette.map((g, i) => (
              <PaletteGroup key={i}>
                {g.map(([name, pic, menu]) => <PaletteButton key={name} $menu={menu} aria-label={name}>{pic}</PaletteButton>)}
              </PaletteGroup>
            ))}
          </PaletteGroups>
        </Palette>

        <Dock>
          <DockTitle>
            <span>ツールマトリクス</span>
            <PlainButton aria-label="切り離す"><DockIcon d="M3 3V1h5v4H6M1 3.500h5v4.500H1z" /></PlainButton>
            <PlainButton aria-label="閉じる"><DockIcon d="M1 1l7 7M8 1L1 8" /></PlainButton>
          </DockTitle>
          <Filter aria-label="フィルター" placeholder="フィルター" />
          <MatrixFrame>
            <MatrixList>
              {sections.map(([name, items]) => (
                <section key={name}>
                  <SectionHead>{name}</SectionHead>
                  <SectionBody>
                    {items.map((it, i) => <CellButton key={i} aria-label={`${name} ${i + 1}`}>{typeof it === "string" ? <Glyph s={it} /> : it}</CellButton>)}
                  </SectionBody>
                </section>
              ))}
            </MatrixList>
            <ScrollTrack $before={1} $thumb={555}><UpArrow /></ScrollTrack>
          </MatrixFrame>
        </Dock>

        <Mdi>
          <Tabs>
            <Tab><Logo /><span>* 無題1</span><CloseButton aria-label="閉じる"><Cross ink="#fff" /></CloseButton></Tab>
            <Tab $active><Logo /><span>* 2-45DXF.dxf</span><CloseButton $hot aria-label="閉じる"><Cross ink="#fff" /></CloseButton></Tab>
          </Tabs>
          <View>
            <i /><HRuler /><i />
            <VRuler /><Drawing /><ScrollTrack $before={285} $thumb={334}><UpArrow /></ScrollTrack>
          </View>
        </Mdi>

        <Side>
          <DockTitle><span>プロパティエディタ</span></DockTitle>
          <PropFrame>
            <PropGroup>
              <label htmlFor="layer">画層:</label><Combo><select id="layer" disabled /></Combo>
              <label htmlFor="color">色:</label><Combo><Swatch /><select id="color" disabled><option>画層による</option></select></Combo>
              <label htmlFor="weight">ラインの太さ:</label><Combo><Swatch $line /><select id="weight" disabled><option>画層による</option></select></Combo>
              <label htmlFor="type">ラインタイプ:</label><Combo><select id="type" disabled><option>画層による</option></select></Combo>
              <label htmlFor="scale">ラインタイプスケール:</label><Field id="scale" disabled />
              <label htmlFor="order">描画順序:</label><Field id="order" disabled />
              <label htmlFor="handle">ハンドル:</label><Field id="handle" disabled />
            </PropGroup>
          </PropFrame>
          <History />
          <Prompt><Svg width="6" height="16" viewBox="0 0 6 16"><path d="M0 3.500l4.500 4.500L0 12.500" fill="none" stroke="#111" /></Svg><input aria-label="コマンド" /></Prompt>
          <DockTitle><span>画層リスト</span></DockTitle>
          <LayerButtons>
            <button aria-label="全表示"><Eye ink="#000" /></button>
            <button aria-label="全非表示"><Eye ink="#9a9a9a" /></button>
            <button aria-label="追加"><Svg width="12" height="12" viewBox="0 0 12 12"><path d="M6 0v12M0 6h12" stroke="#a33" strokeWidth="3.600" /><path d="M6 0.500v11M0.500 6h11" stroke="#f00" strokeWidth="2.400" /></Svg></button>
            <button aria-label="削除" />
          </LayerButtons>
          <LayerList>{["_0-0_", "0", "ADD_LINE"].map((l) => <li key={l}><i />{l}</li>)}</LayerList>
          <DockTitle><span>トライアル</span></DockTitle>
          <Trial>
            <p>This is a trial version of:</p>
            <Offer>
              <h4>QCAD Professional</h4>
              <OfferLinks><a href="#trial">トライアル</a><a href="#buy">購入</a></OfferLinks>
              <p>{"DWG support (OpenDesign®), enhanced DXF support,\nlayouts and viewports, SVG export, block attributes,\nfrom fit points, polyline tools, multi page printing,\ntypes, paste along entity, command line tools, "}<a href="#more">and</a></p>
            </Offer>
            <p>If you would like to use this software productively,<br />full version for a small license fee from our <a href="#shop">Online Shop</a></p>
            <p>By ordering QCAD, you are supporting the future</p>
          </Trial>
        </Side>
      </Body>
      <Command>
        <CommandTitle>コマンドライン<FaintClose aria-label="閉じる"><Cross ink="#fafafa" /></FaintClose></CommandTitle>
        <Svg width="600" height="2" viewBox="0 0 600 2" aria-hidden="true"><path d="M6 1.500h4M42 1.500h3M57 1.500h1M68 1.500h1M82 1.500h2M340 1.500h8M365 1.500h8M383 1.500h2M430 1.500h5M455 1.500h6M484 1.500h12M502 1.500h10M518 1.500h3" stroke="#111" /></Svg>
      </Command>
    </Window>
  );
}
